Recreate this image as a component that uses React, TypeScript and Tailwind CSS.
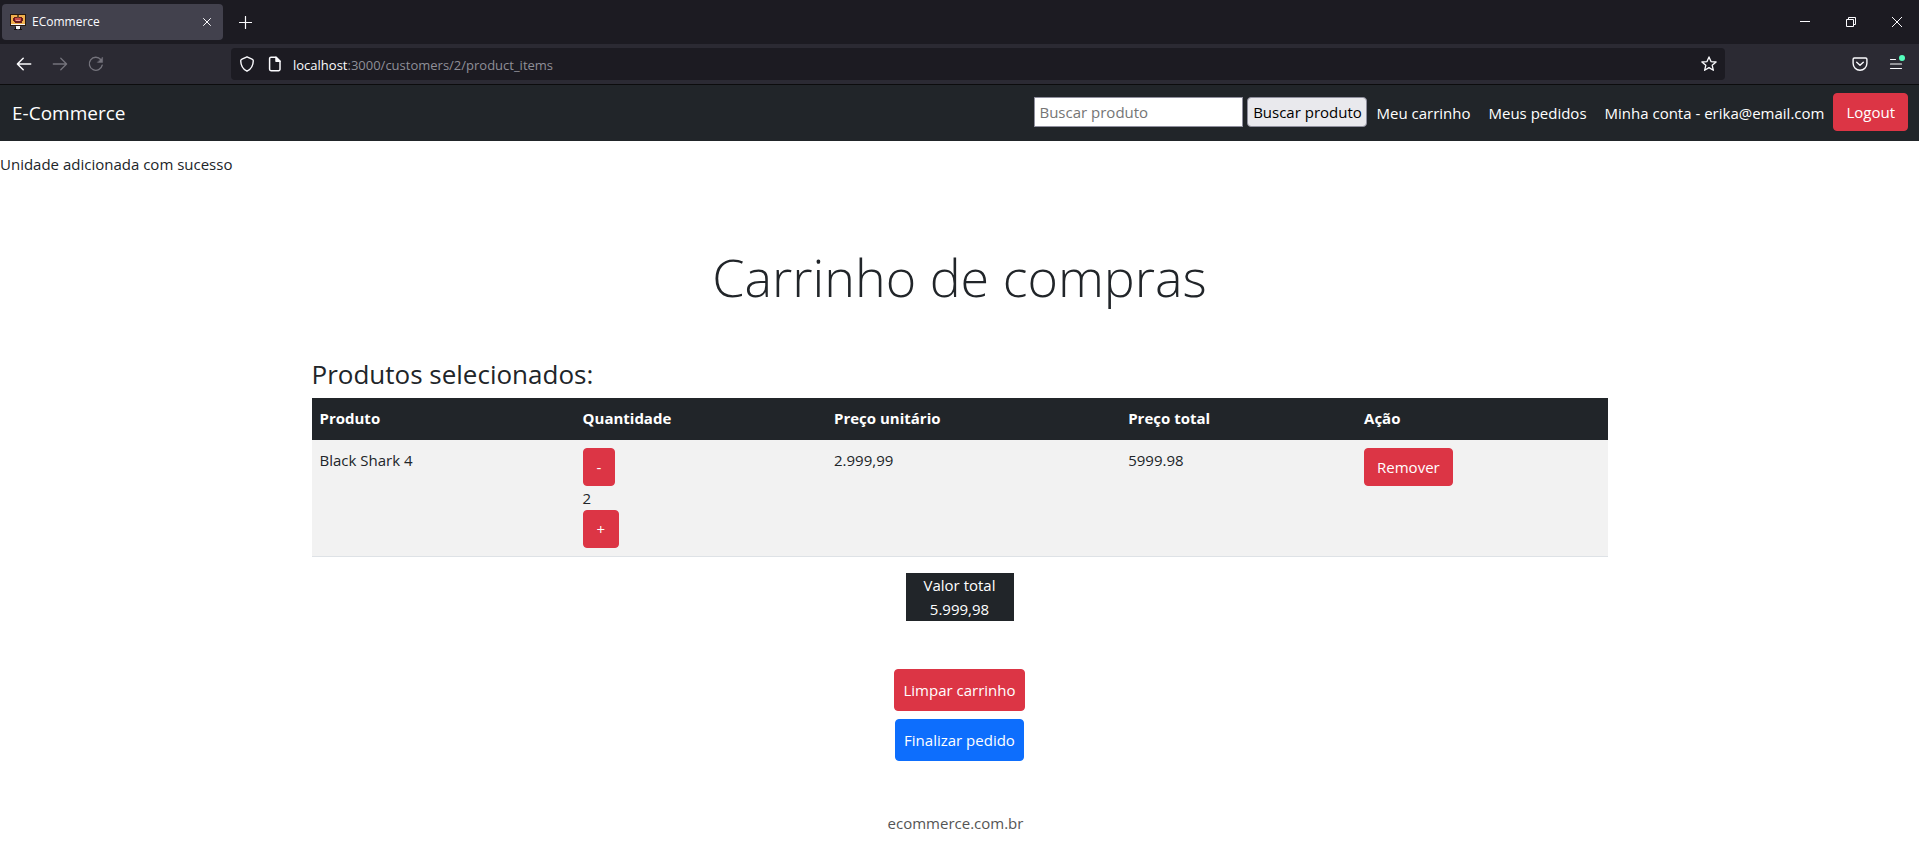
import React from "react";

const strokeProps = {
  fill: "none",
  stroke: "currentColor",
  strokeLinecap: "round" as const,
  strokeLinejoin: "round" as const,
};

function Favicon() {
  return (
    <svg viewBox="0 0 16 17" className="h-[17px] w-4" shapeRendering="crispEdges" aria-hidden="true">
      <rect x="0" y="0" width="16" height="12" fill="#2a1a10" />
      <rect x="1" y="1" width="14" height="9" fill="#f0b04c" />
      <rect x="1" y="10" width="14" height="1" fill="#f4f4f4" />
      <path d="M4 3h8v1h1v3h-1v2H5V8H4V7H3V4h1z" fill="#6b1c1c" />
      <rect x="5" y="4" width="6" height="3" fill="#c94b48" />
      <rect x="6" y="6" width="4" height="1" fill="#eda19b" />
      <rect x="7" y="1" width="2" height="3" fill="#6b4a28" />
      <rect x="6" y="12" width="4" height="3" fill="#f4f4f4" />
      <path d="M5 13h1v2H5zM10 13h1v2h-1zM4 15h3v1H4zM9 15h3v1H9z" fill="#17120f" />
    </svg>
  );
}

function BrowserChrome() {
  return (
    <header className="border-b border-[#0c0c0d] bg-[#2b2a33] text-[#fbfbfe]">
      <div className="flex h-11 items-center bg-[#1c1b22] pl-[2px]">
        <div className="flex h-9 w-[221px] items-center rounded bg-[#42414d] pl-2 pr-3">
          <Favicon />
          <span className="ml-[6px] flex-1 text-[12px] leading-4">ECommerce</span>
          <button type="button" aria-label="Fechar aba">
            <svg viewBox="0 0 8 8" className="size-2" {...strokeProps} strokeWidth="1">
              <path d="M.5.5l7 7M7.5.5l-7 7" />
            </svg>
          </button>
        </div>
        <button type="button" aria-label="Nova aba" className="ml-4">
          <svg viewBox="0 0 13 13" className="size-[13px]" {...strokeProps} strokeWidth="1.2">
            <path d="M6.5.5v12M.5 6.5h12" />
          </svg>
        </button>
        <div className="ml-auto flex gap-[2px]">
          <button type="button" aria-label="Minimizar" className="flex w-11 justify-center">
            <svg viewBox="0 0 10 10" className="size-[10px]" stroke="currentColor">
              <path d="M0 4.5h10" />
            </svg>
          </button>
          <button type="button" aria-label="Restaurar" className="flex w-11 justify-center">
            <svg viewBox="0 0 10 10" className="size-[10px]" fill="none" stroke="currentColor">
              <path d="M.5 2.5h7v7h-7zM2.5 2.5v-2h7v7h-2" />
            </svg>
          </button>
          <button type="button" aria-label="Fechar" className="flex w-11 justify-center">
            <svg viewBox="0 0 10 10" className="size-[10px]" fill="none" stroke="currentColor">
              <path d="M0 0l10 10M10 0L0 10" />
            </svg>
          </button>
        </div>
      </div>

      <div className="flex h-10 items-center pl-4 pr-[15px]">
        <div className="flex w-[215px] shrink-0 gap-5">
          <button type="button" aria-label="Voltar">
            <svg viewBox="0 0 16 16" className="size-4" {...strokeProps} strokeWidth="1.5">
              <path d="M1.5 8h13.2M7.2 2.2L1.4 8l5.8 5.8" />
            </svg>
          </button>
          <button type="button" aria-label="Avançar" className="text-[#74737c]">
            <svg viewBox="0 0 16 16" className="size-4" {...strokeProps} strokeWidth="1.3">
              <path d="M14.5 8H1.3M8.8 2.2L14.6 8l-5.8 5.8" />
            </svg>
          </button>
          <button type="button" aria-label="Recarregar" className="text-[#74737c]">
            <svg viewBox="0 0 16 16" className="size-4" {...strokeProps} strokeWidth="1.4">
              <path d="M14.2 9.2A6.5 6.5 0 1 1 12.8 3.6" />
              <path d="M14.6 1.4v5h-5z" fill="currentColor" strokeWidth=".5" />
            </svg>
          </button>
        </div>
        <div className="flex h-8 flex-1 items-center rounded bg-[#1c1b22] px-2">
          <svg viewBox="0 0 16 16" className="size-4" {...strokeProps} strokeWidth="1.4" aria-hidden="true">
            <path d="M8 .8l5 2.300c.9.4 1.300.8 1.300 1.600-.1 4.400-2.200 8.500-6.300 10.500C3.900 13.200 1.800 9.100 1.700 4.700c0-.8.4-1.200 1.300-1.600z" />
          </svg>
          <svg viewBox="0 0 16 16" className="ml-3 size-4" {...strokeProps} strokeWidth="1.5" aria-hidden="true">
            <path d="M4 1.200h5l4 4v8.100a1.400 1.400 0 0 1-1.400 1.400H4a1.400 1.400 0 0 1-1.400-1.400V2.600A1.400 1.400 0 0 1 4 1.200z" />
            <path d="M9 1.200v4h4z" fill="currentColor" />
          </svg>
          <span className="ml-[10px] flex-1 pt-[2px] text-[13px] leading-5 text-[#8f8f98]">
            <span className="text-[#fbfbfe]">localhost</span>:3000/customers/2/product_items
          </span>
          <button type="button" aria-label="Adicionar aos favoritos">
            <svg viewBox="0 0 16 16" className="size-4" {...strokeProps} strokeWidth="1.3">
              <path d="M8 .9l2 4.700 5.100.4-3.900 3.300 1.200 5L8 11.600l-4.400 2.700 1.200-5L.9 6 6 5.600z" />
            </svg>
          </button>
        </div>
        <div className="ml-[127px] flex gap-5">
          <button type="button" aria-label="Pocket">
            <svg viewBox="0 0 16 16" className="size-4" {...strokeProps} strokeWidth="1.4">
              <path d="M2.400 2h11.200c.8 0 1.300.5 1.300 1.300v4A6.900 6.900 0 0 1 1.100 7.300v-4C1.100 2.500 1.600 2 2.400 2z" />
              <path d="M4.700 6.300L8 9.300l3.300-3" />
            </svg>
          </button>
          <button type="button" aria-label="Menu" className="relative">
            <svg viewBox="0 0 16 16" className="size-4" {...strokeProps} strokeWidth="1.2">
              <path d="M2.500 3.500h5M2.500 8h11M2.500 12.500h11" />
            </svg>
            <span className="absolute -right-px -top-px size-[6px] rounded-full bg-[#54ffbd]" />
          </button>
        </div>
      </div>
    </header>
  );
}

const danger = "rounded border border-[#dc3545] bg-[#dc3545] text-white";
const navLink = "px-[9px] pt-[2px]";

function Navbar() {
  return (
    <nav className="flex h-14 items-center bg-[#212529] pb-[2px] pl-3 pr-[11px] text-white">
      <a href="#inicio" className="pt-[2px] text-[19px] leading-[30px]">E-Commerce</a>
      <div className="ml-auto flex items-center">
        <form className="flex gap-1" onSubmit={(e) => e.preventDefault()}>
          <input
            type="text"
            aria-label="Buscar produto"
            placeholder="Buscar produto"
            className="h-[30px] w-[209px] border border-[#8f8f9d] bg-white px-1 text-black placeholder:text-[#757575]"
          />
          <button type="submit" className="h-[30px] w-[120px] whitespace-nowrap rounded border border-[#8f8f9d] bg-[#e9e9ed] text-black">
            Buscar produto
          </button>
        </form>
        <a href="#carrinho" className={navLink}>Meu carrinho</a>
        <a href="#pedidos" className={navLink}>Meus pedidos</a>
        <a href="#conta" className={navLink}>Minha conta - erika@email.com</a>
        <button type="button" className={`h-[38px] px-3 ${danger}`}>Logout</button>
      </div>
    </nav>
  );
}

export default function App() {
  return (
    <div className="min-h-screen bg-white font-['Open_Sans',sans-serif] text-[15px] leading-6 text-[#212529]">
      <BrowserChrome />
      <Navbar />
      <p className="mt-[11px]">Unidade adicionada com sucesso</p>
      <main className="mx-auto max-w-[1320px] px-3">
        <h1 className="mt-[68px] text-center text-[52px] font-light leading-[66px]">Carrinho de compras</h1>
        <h3 className="mt-[47px] text-[26px] leading-[34px]">Produtos selecionados:</h3>
        <table className="mt-[7px] w-full table-fixed text-left">
          <colgroup>
            <col className="w-[20.3%]" />
            <col className="w-[19.4%]" />
            <col className="w-[22.7%]" />
            <col className="w-[18.2%]" />
            <col className="w-[19.4%]" />
          </colgroup>
          <thead>
            <tr className="h-[42px] bg-[#212529] text-white">
              <th className="px-2 pb-[2px]">Produto</th>
              <th className="px-2 pb-[2px]">Quantidade</th>
              <th className="px-2 pb-[2px]">Preço unitário</th>
              <th className="px-2 pb-[2px]">Preço total</th>
              <th className="px-2 pb-[2px]">Ação</th>
            </tr>
          </thead>
          <tbody>
            <tr className="border-b border-[#dee2e6] bg-[#f2f2f2] align-top">
              <td className="p-2">Black Shark 4</td>
              <td className="p-2">
                <div className="flex flex-col items-start">
                  <button type="button" className={`h-[38px] px-[13px] ${danger}`}>-</button>
                  <span>2</span>
                  <button type="button" className={`h-[38px] px-[13px] ${danger}`}>+</button>
                </div>
              </td>
              <td className="p-2">2.999,99</td>
              <td className="p-2">5999.98</td>
              <td className="p-2">
                <button type="button" className={`block h-[38px] px-3 ${danger}`}>Remover</button>
              </td>
            </tr>
          </tbody>
        </table>
        <div className="mx-auto mt-4 w-1/12 bg-[#212529] text-center text-white">
          <p>Valor total</p>
          <p>5.999,98</p>
        </div>
        <div className="mt-12 flex flex-col items-center gap-2">
          <button type="button" className={`h-[42px] px-2 ${danger}`}>Limpar carrinho</button>
          <button type="button" className="h-[42px] rounded border border-[#0d6efd] bg-[#0d6efd] px-2 text-white">
            Finalizar pedido
          </button>
        </div>
      </main>
      <footer className="mt-[50px] pr-2 text-center text-[#555555]">ecommerce.com.br</footer>
    </div>
  );
}
